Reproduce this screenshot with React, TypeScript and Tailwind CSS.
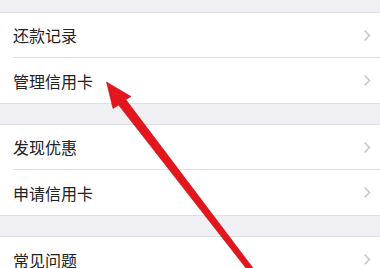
import React from "react";

type Row = { label: string };

const sections: Row[][] = [
  [{ label: "还款记录" }, { label: "管理信用卡" }],
  [{ label: "发现优惠" }, { label: "申请信用卡" }],
  [{ label: "常见问题" }],
];

function Chevron() {
  return (
    <svg width="8" height="13" viewBox="0 0 8 13" className="shrink-0">
      <path d="M1.5 1.5 L6.5 6.5 L1.5 11.5" fill="none" stroke="#c7c7cc" strokeWidth="1.6" />
    </svg>
  );
}

function Section({ rows }: { rows: Row[] }) {
  return (
    <div className="border-y border-[#dedee3] bg-white">
      {rows.map((row, i) => (
        <div key={row.label} className="pl-[13px]">
          <div
            className={
              "flex h-[45px] items-center justify-between pr-[9px] " +
              (i < rows.length - 1 ? "border-b border-[#e3e3e6]" : "")
            }
          >
            <span className="text-[16px] leading-none text-[#222]">{row.label}</span>
            <Chevron />
          </div>
        </div>
      ))}
    </div>
  );
}

function RedArrow() {
  return (
    <svg className="pointer-events-none absolute inset-0" width="380" height="268" viewBox="0 0 380 268">
      <polygon
        points="106.5,82 131,96.5 125.8,99.6 253.2,268.3 248.8,271.7 118.6,105.1 113,108.5"
        fill="#e3161d"
        stroke="#c8101a"
        strokeWidth="0.6"
        strokeLinejoin="round"
      />
    </svg>
  );
}

export default function App() {
  return (
    <div className="relative h-[268px] w-[380px] overflow-hidden bg-[#efeff4] font-['Noto_Sans_CJK_SC','Noto_Sans',sans-serif]">
      <div className="flex flex-col gap-[20px] pt-[12px]">
        {sections.map((rows, i) => (
          <Section key={i} rows={rows} />
        ))}
      </div>
      <RedArrow />
    </div>
  );
}
